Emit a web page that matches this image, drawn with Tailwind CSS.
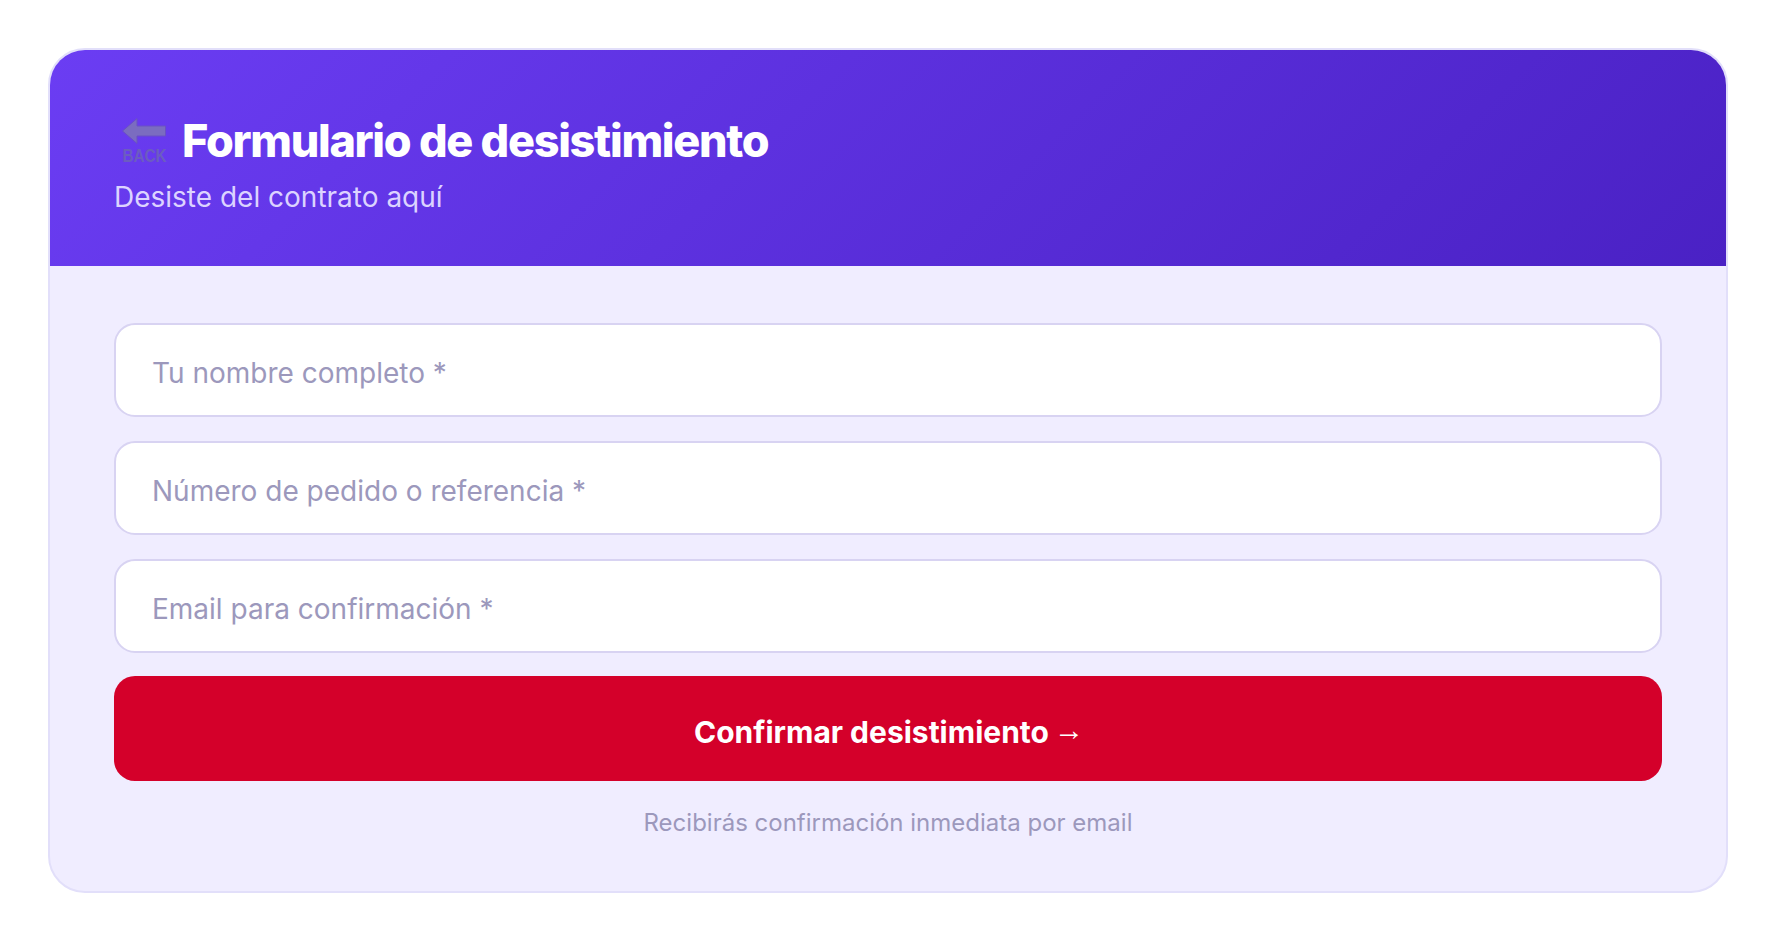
<!DOCTYPE html>
<html lang="es">
<head>
  <meta charset="UTF-8" />
  <title>Formulario de desistimiento</title>
  <script src="https://cdn.jsdelivr.net/npm/@tailwindcss/browser@4"></script>
</head>
<body class="bg-white font-['Inter',sans-serif]">
  <div class="pl-[48px] pt-[48px]">
    <div class="w-[1680px] overflow-hidden rounded-[37px] border-2 border-[#e2dffa] bg-[#f0edff]">
      <div class="h-[216px] bg-[linear-gradient(135deg,#6b3df3,#4a21c4)] pl-[64px] pt-[65px]">
        <div class="flex items-center gap-[16px] pl-[8px]">
          <div class="flex w-[44px] flex-col items-center">
            <svg viewBox="0 0 44 26" class="h-[26px] w-[44px]"><path d="M0.5 13 L15 0.5 L15 8 L43.5 8 L43.5 18 L15 18 L15 25.5 Z" fill="#7b6cc0" stroke="#6a50c4" /></svg>
            <span class="mt-[3px] scale-x-[0.8] text-[19px] leading-[18px] font-bold whitespace-nowrap text-[#6c5cc0] font-['Liberation_Sans',sans-serif]">BACK</span>
          </div>
          <h1 class="text-[45px] leading-[52px] font-extrabold tracking-[-0.029em] text-white">Formulario de desistimiento</h1>
        </div>
        <p class="mt-[10px] text-[28px] leading-[40px] text-[#dcd3ff]">Desiste del contrato aquí</p>
      </div>
      <form class="flex flex-col gap-[24px] px-[64px] pt-[56.5px] pb-[51px]">
        <input type="text" placeholder="Tu nombre completo *" class="h-[94px] rounded-[21px] border-2 border-[#d8d3f2] bg-white px-[36px] pt-[6px] text-[28px] placeholder-[#9c98bc]" />
        <input type="text" placeholder="Número de pedido o referencia *" class="h-[94px] rounded-[21px] border-2 border-[#d8d3f2] bg-white px-[36px] pt-[6px] text-[28px] placeholder-[#9c98bc]" />
        <input type="text" placeholder="Email para confirmación *" class="h-[94px] rounded-[21px] border-2 border-[#d8d3f2] bg-white px-[36px] pt-[6px] text-[28px] placeholder-[#9c98bc]" />
        <button type="button" class="-mt-[1px] h-[105px] rounded-[21px] bg-[#d4002a] pl-[2px] pt-[8px] text-[30px] font-bold text-white">Confirmar desistimiento <span class="relative -top-[3px] -ml-[2px] font-['Liberation_Sans',sans-serif] font-normal">→</span></button>
        <p class="mt-[1px] text-center text-[24px] leading-[34px] text-[#9c98bc]">Recibirás confirmación inmediata por email</p>
      </form>
    </div>
  </div>
</body>
</html>
